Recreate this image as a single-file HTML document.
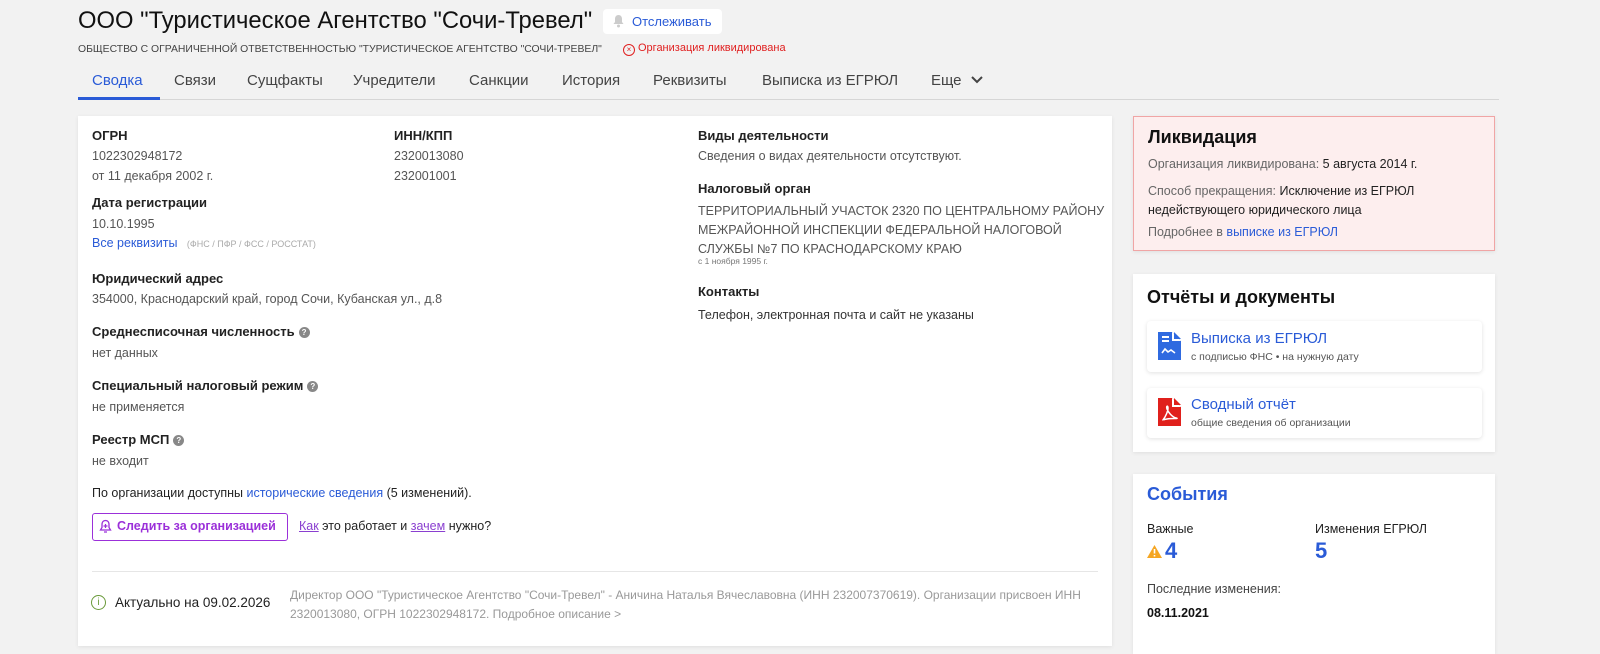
<!DOCTYPE html>
<html><head><meta charset="utf-8"><style>
*{margin:0;padding:0;box-sizing:border-box}
body{width:1600px;height:641px;overflow:hidden;background:#f2f2f2;font-family:"Liberation Sans","Noto Sans CJK SC",sans-serif;color:#222;position:relative}
.a{position:absolute;white-space:nowrap}
.h{font-weight:bold;font-size:13px;color:#222}
.v{font-size:12.5px;color:#555}
.d{font-size:12.5px;color:#222}
.blue{color:#2a5bd7}
.card{position:absolute;background:#fff;box-shadow:0 1px 4px rgba(0,0,0,.08)}
.q{display:inline-block;width:11px;height:11px;border-radius:50%;background:#888;color:#fff;font-size:8px;text-align:center;line-height:11px;font-weight:bold;vertical-align:1px;margin-left:4px}
.tab{position:absolute;top:72px;font-size:15px;color:#444}
</style></head><body>
<div class="a" style="left:78px;top:7px;font-size:23.8px;color:#111">ООО "Туристическое Агентство "Сочи-Тревел"</div>
<div class="a" style="left:603px;top:9px;width:119px;height:25px;background:#fff;border-radius:4px;font-size:13px;color:#2a5bd7;line-height:25px;padding-left:29px">Отслеживать
<svg style="position:absolute;left:9px;top:5px" width="13" height="14" viewBox="0 0 13 14"><path d="M6.5 1C4 1 3 3 3 5v3L1.5 10h10L10 8V5c0-2-1-4-3.5-4z" fill="#ccc"/><circle cx="6.5" cy="12" r="1.5" fill="#ccc"/></svg></div>
<div class="a" style="left:78px;top:44px;font-size:10.4px;color:#444">ОБЩЕСТВО С ОГРАНИЧЕННОЙ ОТВЕТСТВЕННОСТЬЮ "ТУРИСТИЧЕСКОЕ АГЕНТСТВО "СОЧИ-ТРЕВЕЛ"</div>
<div class="a" style="left:623px;top:42px;font-size:11px;color:#e02020"><span style="display:inline-block;width:12px;height:12px;border:1px solid #e02020;border-radius:50%;font-size:8px;text-align:center;line-height:10px;margin-right:3px;vertical-align:-1px">×</span>Организация ликвидирована</div>
<div class="tab" style="left:92px;color:#2a5bd7">Сводка</div>
<div class="tab" style="left:174px">Связи</div>
<div class="tab" style="left:247px">Сущфакты</div>
<div class="tab" style="left:353px">Учредители</div>
<div class="tab" style="left:469px">Санкции</div>
<div class="tab" style="left:562px">История</div>
<div class="tab" style="left:653px">Реквизиты</div>
<div class="tab" style="left:762px">Выписка из ЕГРЮЛ</div>
<div class="tab" style="left:931px">Еще <svg width="14" height="10" viewBox="0 0 14 10" style="margin-left:4px"><path d="M2 2l5 5 5-5" stroke="#444" stroke-width="2" fill="none"/></svg></div>
<div class="a" style="left:78px;top:99px;width:1421px;height:1px;background:#d6d6d6"></div>
<div class="a" style="left:78px;top:97px;width:82px;height:3px;background:#2a5bd7"></div>

<div class="card" style="left:78px;top:116px;width:1034px;height:530px">
<div class="a h" style="left:14px;top:12px">ОГРН</div>
<div class="a v" style="left:14px;top:33px">1022302948172</div>
<div class="a v" style="left:14px;top:53px">от 11 декабря 2002 г.</div>
<div class="a h" style="left:14px;top:79px">Дата регистрации</div>
<div class="a v" style="left:14px;top:101px">10.10.1995</div>
<div class="a" style="left:14px;top:120px;font-size:12.5px;color:#2a5bd7">Все реквизиты <span style="font-size:9px;color:#aaa;margin-left:6px">(ФНС / ПФР / ФСС / РОССТАТ)</span></div>
<div class="a h" style="left:14px;top:155px">Юридический адрес</div>
<div class="a v" style="left:14px;top:176px">354000, Краснодарский край, город Сочи, Кубанская ул., д.8</div>
<div class="a h" style="left:14px;top:208px">Среднесписочная численность<span class="q">?</span></div>
<div class="a v" style="left:14px;top:230px">нет данных</div>
<div class="a h" style="left:14px;top:262px">Специальный налоговый режим<span class="q">?</span></div>
<div class="a v" style="left:14px;top:284px">не применяется</div>
<div class="a h" style="left:14px;top:316px">Реестр МСП<span class="q">?</span></div>
<div class="a v" style="left:14px;top:338px">не входит</div>
<div class="a d" style="left:14px;top:370px">По организации доступны <span class="blue">исторические сведения</span> (5 изменений).</div>
<div class="a" style="left:14px;top:397px;width:196px;height:28px;border:1.5px solid #9b30d9;border-radius:3px;font-size:12.5px;color:#9b30d9;font-weight:bold;line-height:25px;padding-left:24px">Следить за организацией
<svg style="position:absolute;left:6px;top:5px" width="13" height="15" viewBox="0 0 13 15"><path d="M6.5 1.5C4 1.5 3 3.5 3 5.5v3L1.5 11h10L10 8.5v-3c0-2-1-4-3.5-4zM5 13h3" stroke="#9b30d9" stroke-width="1.3" fill="none"/><path d="M6.5 5v4M4.5 7h4" stroke="#9b30d9" stroke-width="1.2"/></svg></div>
<div class="a d" style="left:221px;top:403px"><span style="color:#8a3fd0;text-decoration:underline">Как</span> это работает и <span style="color:#8a3fd0;text-decoration:underline">зачем</span> нужно?</div>
<div class="a" style="left:14px;top:455px;width:1006px;height:1px;background:#e6e6e6"></div>
<div class="a" style="left:13px;top:479px;width:15px;height:15px;border:1.3px solid #6a9a3a;border-radius:50%;color:#6a9a3a;font-size:10px;text-align:center;line-height:13px">i</div>
<div class="a" style="left:37px;top:479px;font-size:13.5px;color:#222">Актуально на 09.02.2026</div>
<div class="a" style="left:212px;top:470px;font-size:12px;color:#999;line-height:19px">Директор ООО "Туристическое Агентство "Сочи-Тревел" - Аничина Наталья Вячеславовна (ИНН 232007370619). Организации присвоен ИНН<br>2320013080, ОГРН 1022302948172. Подробное описание &gt;</div>

<div class="a h" style="left:316px;top:12px">ИНН/КПП</div>
<div class="a v" style="left:316px;top:33px">2320013080</div>
<div class="a v" style="left:316px;top:53px">232001001</div>

<div class="a h" style="left:620px;top:12px">Виды деятельности</div>
<div class="a v" style="left:620px;top:33px">Сведения о видах деятельности отсутствуют.</div>
<div class="a h" style="left:620px;top:65px">Налоговый орган</div>
<div class="a v" style="left:620px;top:86px;line-height:19px">ТЕРРИТОРИАЛЬНЫЙ УЧАСТОК 2320 ПО ЦЕНТРАЛЬНОМУ РАЙОНУ<br>МЕЖРАЙОННОЙ ИНСПЕКЦИИ ФЕДЕРАЛЬНОЙ НАЛОГОВОЙ<br>СЛУЖБЫ №7 ПО КРАСНОДАРСКОМУ КРАЮ</div>
<div class="a" style="left:620px;top:140px;font-size:8.5px;color:#777">с 1 ноября 1995 г.</div>
<div class="a h" style="left:620px;top:168px">Контакты</div>
<div class="a d" style="left:620px;top:192px;color:#333">Телефон, электронная почта и сайт не указаны</div>
</div>

<div class="card" style="left:1133px;top:116px;width:362px;height:135px;background:#fdeeee;border:1.5px solid #f0a5a5">
<div class="a" style="left:14px;top:10px;font-size:18px;font-weight:bold;color:#111">Ликвидация</div>
<div class="a v" style="left:14px;top:40px;color:#666">Организация ликвидирована: <span style="color:#222">5 августа 2014 г.</span></div>
<div class="a v" style="left:14px;top:65px;line-height:19px;color:#666">Способ прекращения: <span style="color:#222">Исключение из ЕГРЮЛ<br>недействующего юридического лица</span></div>
<div class="a v" style="left:14px;top:108px;color:#666">Подробнее в <span class="blue">выписке из ЕГРЮЛ</span></div>
</div>

<div class="card" style="left:1133px;top:274px;width:362px;height:178px">
<div class="a" style="left:14px;top:13px;font-size:18px;font-weight:bold;color:#111">Отчёты и документы</div>
<div class="a" style="left:14px;top:47px;width:335px;height:51px;background:#fff;box-shadow:0 1px 4px rgba(0,0,0,.12);border-radius:4px">
<svg style="position:absolute;left:11px;top:11px" width="23" height="28" viewBox="0 0 23 28"><path d="M0 0h14l9 9v19H0z" fill="#2f6ae0"/><path d="M14 0v9h9" fill="#fff"/><path d="M16 0v7h7" fill="#2f6ae0"/><path d="M4 5h7M4 9h7" stroke="#fff" stroke-width="2"/><path d="M4 21l3-4 3 3 3-2 4 3" stroke="#fff" stroke-width="1.6" fill="none"/></svg>
<div class="a" style="left:44px;top:9px;font-size:15px;color:#2a5bd7">Выписка из ЕГРЮЛ</div>
<div class="a" style="left:44px;top:30px;font-size:10.5px;color:#555">с подписью ФНС • на нужную дату</div></div>
<div class="a" style="left:14px;top:114px;width:335px;height:50px;background:#fff;box-shadow:0 1px 4px rgba(0,0,0,.12);border-radius:4px">
<svg style="position:absolute;left:11px;top:10px" width="23" height="28" viewBox="0 0 23 28"><path d="M0 0h14l9 9v19H0z" fill="#e0201c"/><path d="M14 0v9h9" fill="#fff"/><path d="M16 0v7h7" fill="#e0201c"/><path d="M5 22c3-4 5-9 5-12s-2-2-1 1 5 8 9 9-4 0-9 1-4 1-4 1" stroke="#fff" stroke-width="1.5" fill="none"/></svg>
<div class="a" style="left:44px;top:8px;font-size:15px;color:#2a5bd7">Сводный отчёт</div>
<div class="a" style="left:44px;top:29px;font-size:10.5px;color:#555">общие сведения об организации</div></div>
</div>

<div class="card" style="left:1133px;top:474px;width:362px;height:180px">
<div class="a" style="left:14px;top:10px;font-size:18px;font-weight:bold;color:#2a5bd7">События</div>
<div class="a d" style="left:14px;top:48px;font-size:12.5px">Важные</div>
<div class="a" style="left:14px;top:64px;font-size:22px;font-weight:bold;color:#2a5bd7"><svg width="15" height="13" viewBox="0 0 15 13" style="margin-right:3px"><path d="M7.5 0L15 13H0z" fill="#f5a623"/><path d="M7.5 4v4.5M7.5 10v1.5" stroke="#fff" stroke-width="1.6"/></svg>4</div>
<div class="a d" style="left:182px;top:48px;font-size:12.5px">Изменения ЕГРЮЛ</div>
<div class="a" style="left:182px;top:64px;font-size:22px;font-weight:bold;color:#2a5bd7">5</div>
<div class="a d" style="left:14px;top:108px;color:#444">Последние изменения:</div>
<div class="a" style="left:14px;top:132px;font-size:12.5px;font-weight:bold;color:#111">08.11.2021</div>
</div>
</body></html>
